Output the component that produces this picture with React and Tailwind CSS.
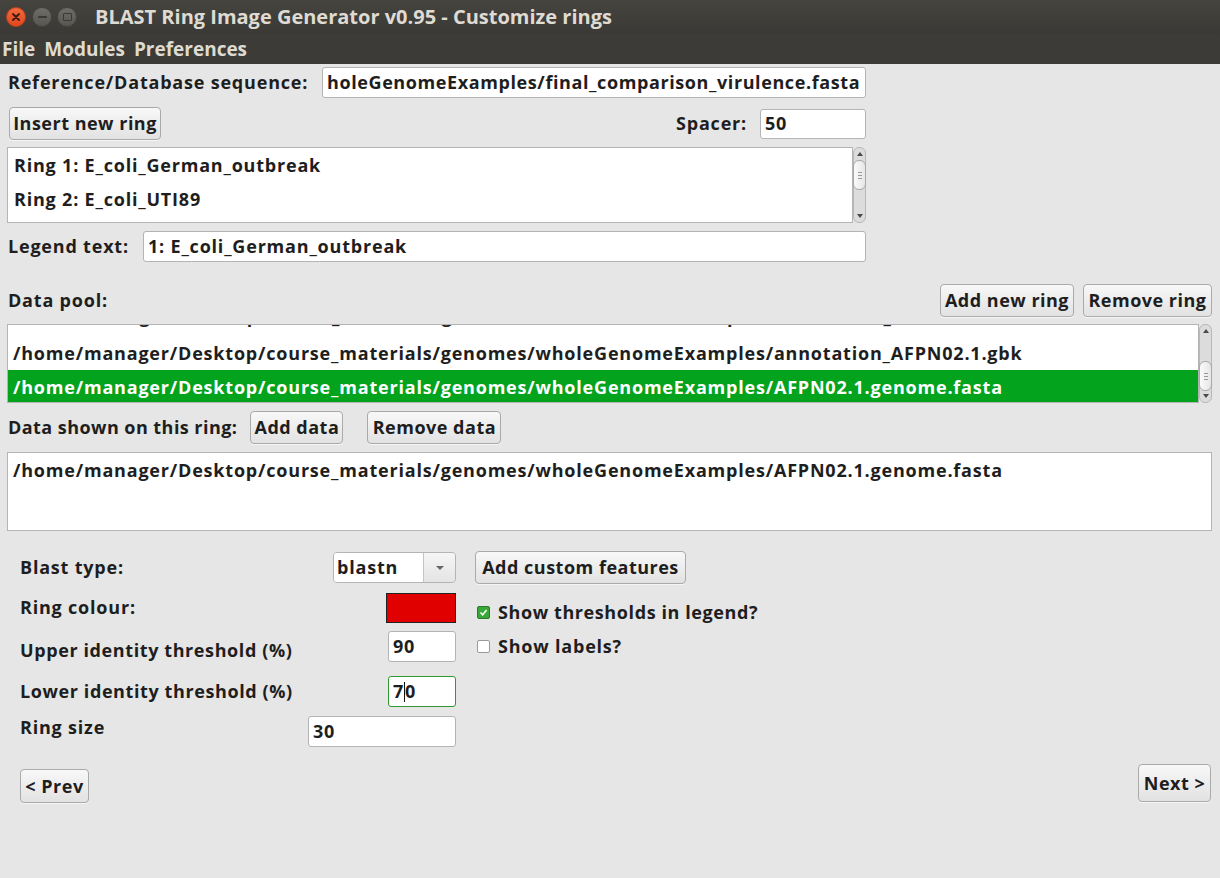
import React from "react";

const font = { fontFamily: '"Open Sans", "DejaVu Sans", sans-serif' };

function Btn({ children, className = "" }) {
  return (
    <div
      className={
        "flex items-center justify-center whitespace-nowrap rounded-[4px] border border-[#aaaaaa] bg-gradient-to-b from-[#f8f8f8] to-[#e2e2e2] text-[18px] tracking-[0.5px] text-[#1e1e1e] shadow-[0_1px_0_rgba(255,255,255,0.6)] " +
        className
      }
    >
      {children}
    </div>
  );
}

function Input({ children, className = "", green = false }) {
  return (
    <div
      className={
        "flex items-center overflow-hidden whitespace-nowrap rounded-[3px] border bg-white px-[4px] text-[18px] text-[#1e1e1e] " +
        (green ? "border-[#2f9a2f] " : "border-[#b4b4b4] ") +
        className
      }
    >
      {children}
    </div>
  );
}

function VScroll({ thumbTop, thumbH }) {
  return (
    <div className="relative flex h-full w-[13px] flex-col items-center rounded-[6px] border border-[#b8b8b8] bg-[#dcdcdc]">
      <div className="mt-[4px] h-0 w-0 border-x-[3px] border-b-[4px] border-x-transparent border-b-[#4a4a4a]" />
      <div
        className="absolute left-[-1px] flex w-[13px] flex-col items-center justify-center gap-[2px] rounded-[6px] border border-[#a8a8a8] bg-gradient-to-r from-[#fafafa] to-[#e6e6e6]"
        style={{ top: thumbTop, height: thumbH }}
      >
        <div className="h-px w-[4px] bg-[#9a9a9a]" />
        <div className="h-px w-[4px] bg-[#9a9a9a]" />
        <div className="h-px w-[4px] bg-[#9a9a9a]" />
      </div>
      <div className="mt-auto mb-[4px] h-0 w-0 border-x-[3px] border-t-[4px] border-x-transparent border-t-[#4a4a4a]" />
    </div>
  );
}

export default function App() {
  const path = "/home/manager/Desktop/course_materials/genomes/wholeGenomeExamples/";
  return (
    <div className="h-[878px] w-[1220px] overflow-hidden bg-[#e6e6e6] font-bold tracking-[0.8px] text-[#1e1e1e]" style={font}>
      {/* title bar */}
      <div className="flex h-[34px] items-center bg-gradient-to-b from-[#45443f] to-[#3a3935] tracking-normal">
        <div className="ml-[6px] flex h-[20px] w-[20px] items-center justify-center rounded-full border border-[#b8401c] bg-gradient-to-b from-[#f2693c] to-[#e0471d]">
          <svg width="10" height="10" viewBox="0 0 10 10">
            <path d="M2 2L8 8M8 2L2 8" stroke="#3a1a10" strokeWidth="1.8" strokeLinecap="round" />
          </svg>
        </div>
        <div className="ml-[6px] flex h-[20px] w-[20px] items-center justify-center rounded-full border border-[#45443f] bg-gradient-to-b from-[#6e6d68] to-[#57564f]">
          <div className="h-[2px] w-[9px] rounded bg-[#3a3935]" />
        </div>
        <div className="ml-[5px] flex h-[20px] w-[20px] items-center justify-center rounded-full border border-[#45443f] bg-gradient-to-b from-[#6e6d68] to-[#57564f]">
          <div className="h-[8px] w-[9px] rounded-[1px] border-[1.5px] border-[#3a3935]" />
        </div>
        <div className="ml-[18px] text-[20px] text-[#dfdbd2]">
          BLAST Ring Image Generator v0.95 - Customize rings
        </div>
      </div>
      {/* menu bar */}
      <div className="flex h-[30px] items-center gap-[9px] bg-[#3c3b37] pl-[2px] text-[19px] tracking-normal text-[#dfdbd2]">
        <span>File</span>
        <span>Modules</span>
        <span>Preferences</span>
      </div>

      {/* top section */}
      <div className="w-[866px] pl-[8px]">
        <div className="mt-[3px] flex h-[31px] items-center">
          <span className="text-[18px]">Reference/Database sequence:</span>
          <Input className="ml-auto h-[31px] w-[544px] tracking-[0.6px]">holeGenomeExamples/final_comparison_virulence.fasta</Input>
        </div>
        <div className="mt-[9px] flex h-[33px] items-center">
          <Btn className="ml-px h-[33px] w-[152px]">Insert new ring</Btn>
          <span className="ml-auto text-[18px]">Spacer:</span>
          <Input className="ml-[13px] h-[30px] w-[106px]">50</Input>
        </div>
        <div className="mt-[7px] flex h-[76px]">
          <div className="-ml-px flex flex-1 flex-col border border-[#b4b4b4] bg-white pl-[6px] text-[18px]">
            <div className="flex h-[34px] items-center">Ring 1: E_coli_German_outbreak</div>
            <div className="flex h-[34px] items-center">Ring 2: E_coli_UTI89</div>
          </div>
          <VScroll thumbTop={12} thumbH={30} />
        </div>
        <div className="mt-[8px] flex h-[31px] items-center">
          <span className="text-[18px]">Legend text:</span>
          <Input className="ml-auto h-[31px] w-[723px]">1: E_coli_German_outbreak</Input>
        </div>
      </div>

      {/* data pool section */}
      <div className="pl-[8px] pr-[8px]">
        <div className="mt-[22px] flex h-[32px] items-center">
          <span className="text-[18px]">Data pool:</span>
          <Btn className="ml-auto h-[33px] w-[134px]">Add new ring</Btn>
          <Btn className="ml-[9px] h-[33px] w-[129px]">Remove ring</Btn>
        </div>
        <div className="mt-[8px] flex h-[79px]">
          <div className="-ml-px flex flex-1 flex-col overflow-hidden border border-[#b4b4b4] bg-white text-[18px]">
            <div className="relative h-[12px] shrink-0 overflow-hidden">
              <div className="absolute bottom-[4px] left-[6px] whitespace-nowrap leading-[34px]">
                {path}annotation_AFPN02.1.fasta
              </div>
            </div>
            <div className="flex h-[33px] shrink-0 items-center whitespace-nowrap pl-[5px]">{path}annotation_AFPN02.1.gbk</div>
            <div className="flex h-[34px] shrink-0 items-center whitespace-nowrap bg-[#03a31d] pl-[5px] text-white">
              {path}AFPN02.1.genome.fasta
            </div>
          </div>
          <VScroll thumbTop={36} thumbH={30} />
        </div>
        <div className="mt-[8px] flex h-[33px] items-center">
          <span className="text-[18px] tracking-[0.45px]">Data shown on this ring:</span>
          <Btn className="ml-[13px] h-[33px] w-[93px]">Add data</Btn>
          <Btn className="ml-[24px] h-[33px] w-[134px]">Remove data</Btn>
        </div>
        <div className="-ml-px mt-[8px] h-[79px] border border-[#b4b4b4] bg-white pl-[5px] text-[18px]">
          <div className="flex h-[34px] items-center whitespace-nowrap">{path}AFPN02.1.genome.fasta</div>
        </div>
      </div>

      {/* settings */}
      <div className="mt-[20px] flex pl-[20px]">
        <div className="flex w-[436px] flex-col text-[18px]">
          <div className="flex h-[33px] items-center justify-between">
            <span>Blast type:</span>
            <div className="flex h-[31px] w-[123px] overflow-hidden rounded-[4px] border border-[#b4b4b4]">
              <div className="flex flex-1 items-center bg-white pl-[3px]">blastn</div>
              <div className="flex w-[32px] items-center justify-center border-l border-[#c4c4c4] bg-gradient-to-b from-[#f6f6f6] to-[#e4e4e4]">
                <div className="h-0 w-0 border-x-[4px] border-t-[4px] border-x-transparent border-t-[#666]" />
              </div>
            </div>
          </div>
          <div className="mt-[9px] flex h-[29px] items-center justify-between">
            <span>Ring colour:</span>
            <div className="h-[30px] w-[70px] border border-[#222] bg-[#e00000]" />
          </div>
          <div className="mt-[9px] flex h-[31px] items-center justify-between">
            <span className="mt-[7px] tracking-[0.6px]">Upper identity threshold (%)</span>
            <Input className="h-[31px] w-[68px]">90</Input>
          </div>
          <div className="mt-[14px] flex h-[31px] items-center justify-between">
            <span className="tracking-[0.6px]">Lower identity threshold (%)</span>
            <Input green className="h-[31px] w-[68px]">
              7<span className="inline-block h-[20px] w-px bg-[#111]" />0
            </Input>
          </div>
          <div className="mt-[9px] flex h-[31px] justify-between">
            <span className="leading-[22px]">Ring size</span>
            <Input className="h-[31px] w-[148px]">30</Input>
          </div>
        </div>
        <div className="ml-[19px] flex flex-col text-[18px]">
          <Btn className="h-[33px] w-[211px]">Add custom features</Btn>
          <div className="mt-[18px] flex h-[20px] items-center">
            <div className="ml-[2px] flex h-[13px] w-[13px] items-center justify-center rounded-[2px] border border-[#2a7a2a] bg-[#38a838]">
              <svg width="9" height="9" viewBox="0 0 9 9">
                <path d="M1.5 4.5L3.7 6.8L7.6 2" stroke="white" strokeWidth="1.6" fill="none" />
              </svg>
            </div>
            <span className="ml-[8px] tracking-[0.6px]">Show thresholds in legend?</span>
          </div>
          <div className="mt-[14px] flex h-[20px] items-center">
            <div className="ml-[2px] h-[13px] w-[13px] rounded-[2px] border border-[#9a9a9a] bg-white" />
            <span className="ml-[8px]">Show labels?</span>
          </div>
        </div>
      </div>

      <div className="mt-[17px] flex items-end pl-[20px] pr-[9px]">
        <Btn className="h-[34px] w-[69px]">&lt; Prev</Btn>
        <Btn className="ml-auto mb-[1px] h-[38px] w-[73px]">Next &gt;</Btn>
      </div>
    </div>
  );
}
